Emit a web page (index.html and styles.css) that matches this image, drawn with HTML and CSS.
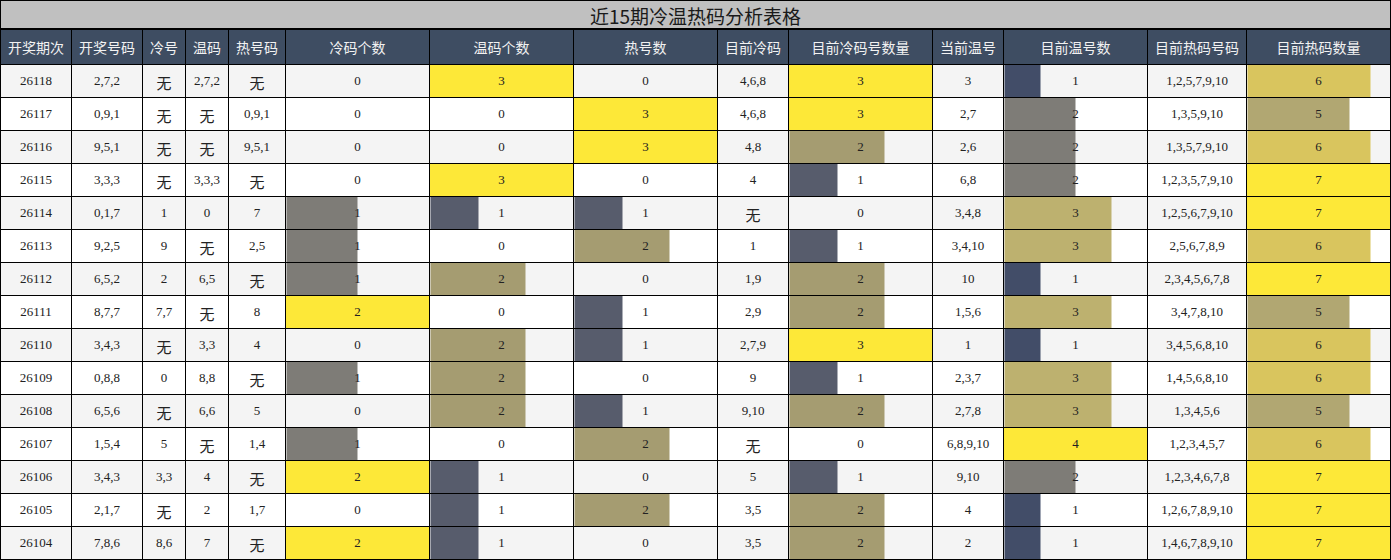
FILE: index.html
```html
<!DOCTYPE html>
<html lang="zh">
<head>
<meta charset="utf-8">
<title>近15期冷温热码分析表格</title>
<link rel="stylesheet" href="styles.css">
</head>
<body>
<div class="title">近15期冷温热码分析表格</div>
<table class="grid">
<colgroup>
<col class="w71"><col class="w71"><col class="w43"><col class="w43"><col class="w57">
<col class="w144"><col class="w144"><col class="w144"><col class="w71"><col class="w144">
<col class="w71"><col class="w144"><col class="w99"><col class="w145">
</colgroup>
<thead>
<tr><th>开奖期次</th><th>开奖号码</th><th>冷号</th><th>温码</th><th>热号码</th><th>冷码个数</th><th>温码个数</th><th>热号数</th><th>目前冷码</th><th>目前冷码号数量</th><th>当前温号</th><th>目前温号数</th><th>目前热码号码</th><th>目前热码数量</th></tr>
</thead>
<tbody>
<tr><td>26118</td><td>2,7,2</td><td class="wu">无</td><td>2,7,2</td><td class="wu">无</td><td>0</td><td class="full">3</td><td>0</td><td>4,6,8</td><td class="full">3</td><td>3</td><td class="q14">1</td><td>1,2,5,7,9,10</td><td class="q67">6</td></tr>
<tr><td>26117</td><td>0,9,1</td><td class="wu">无</td><td class="wu">无</td><td>0,9,1</td><td>0</td><td>0</td><td class="full">3</td><td>4,6,8</td><td class="full">3</td><td>2,7</td><td class="q12">2</td><td>1,3,5,9,10</td><td class="q57">5</td></tr>
<tr><td>26116</td><td>9,5,1</td><td class="wu">无</td><td class="wu">无</td><td>9,5,1</td><td>0</td><td>0</td><td class="full">3</td><td>4,8</td><td class="q23">2</td><td>2,6</td><td class="q12">2</td><td>1,3,5,7,9,10</td><td class="q67">6</td></tr>
<tr><td>26115</td><td>3,3,3</td><td class="wu">无</td><td>3,3,3</td><td class="wu">无</td><td>0</td><td class="full">3</td><td>0</td><td>4</td><td class="q13">1</td><td>6,8</td><td class="q12">2</td><td>1,2,3,5,7,9,10</td><td class="full">7</td></tr>
<tr><td>26114</td><td>0,1,7</td><td>1</td><td>0</td><td>7</td><td class="q12">1</td><td class="q13">1</td><td class="q13">1</td><td class="wu">无</td><td>0</td><td>3,4,8</td><td class="q34">3</td><td>1,2,5,6,7,9,10</td><td class="full">7</td></tr>
<tr><td>26113</td><td>9,2,5</td><td>9</td><td class="wu">无</td><td>2,5</td><td class="q12">1</td><td>0</td><td class="q23">2</td><td>1</td><td class="q13">1</td><td>3,4,10</td><td class="q34">3</td><td>2,5,6,7,8,9</td><td class="q67">6</td></tr>
<tr><td>26112</td><td>6,5,2</td><td>2</td><td>6,5</td><td class="wu">无</td><td class="q12">1</td><td class="q23">2</td><td>0</td><td>1,9</td><td class="q23">2</td><td>10</td><td class="q14">1</td><td>2,3,4,5,6,7,8</td><td class="full">7</td></tr>
<tr><td>26111</td><td>8,7,7</td><td>7,7</td><td class="wu">无</td><td>8</td><td class="full">2</td><td>0</td><td class="q13">1</td><td>2,9</td><td class="q23">2</td><td>1,5,6</td><td class="q34">3</td><td>3,4,7,8,10</td><td class="q57">5</td></tr>
<tr><td>26110</td><td>3,4,3</td><td class="wu">无</td><td>3,3</td><td>4</td><td>0</td><td class="q23">2</td><td class="q13">1</td><td>2,7,9</td><td class="full">3</td><td>1</td><td class="q14">1</td><td>3,4,5,6,8,10</td><td class="q67">6</td></tr>
<tr><td>26109</td><td>0,8,8</td><td>0</td><td>8,8</td><td class="wu">无</td><td class="q12">1</td><td class="q23">2</td><td>0</td><td>9</td><td class="q13">1</td><td>2,3,7</td><td class="q34">3</td><td>1,4,5,6,8,10</td><td class="q67">6</td></tr>
<tr><td>26108</td><td>6,5,6</td><td class="wu">无</td><td>6,6</td><td>5</td><td>0</td><td class="q23">2</td><td class="q13">1</td><td>9,10</td><td class="q23">2</td><td>2,7,8</td><td class="q34">3</td><td>1,3,4,5,6</td><td class="q57">5</td></tr>
<tr><td>26107</td><td>1,5,4</td><td>5</td><td class="wu">无</td><td>1,4</td><td class="q12">1</td><td>0</td><td class="q23">2</td><td class="wu">无</td><td>0</td><td>6,8,9,10</td><td class="full">4</td><td>1,2,3,4,5,7</td><td class="q67">6</td></tr>
<tr><td>26106</td><td>3,4,3</td><td>3,3</td><td>4</td><td class="wu">无</td><td class="full">2</td><td class="q13">1</td><td>0</td><td>5</td><td class="q13">1</td><td>9,10</td><td class="q12">2</td><td>1,2,3,4,6,7,8</td><td class="full">7</td></tr>
<tr><td>26105</td><td>2,1,7</td><td class="wu">无</td><td>2</td><td>1,7</td><td>0</td><td class="q13">1</td><td class="q23">2</td><td>3,5</td><td class="q23">2</td><td>4</td><td class="q14">1</td><td>1,2,6,7,8,9,10</td><td class="full">7</td></tr>
<tr><td>26104</td><td>7,8,6</td><td>8,6</td><td>7</td><td class="wu">无</td><td class="full">2</td><td class="q13">1</td><td>0</td><td>3,5</td><td class="q23">2</td><td>2</td><td class="q14">1</td><td>1,4,6,7,8,9,10</td><td class="full">7</td></tr>
</tbody>
</table>
</body>
</html>
```

FILE: styles.css
```css
html, body {
  margin: 0;
  padding: 0;
  background: #ffffff;
}

.title {
  box-sizing: border-box;
  width: 1391px;
  height: 29px;
  border: 1px solid #000;
  background: #c0c0c0;
  color: #1a1a1a;
  font-family: "Noto Sans CJK SC", "Noto Sans", sans-serif;
  font-size: 19px;
  line-height: 29px;
  text-align: center;
}

.grid {
  width: 1391px;
  table-layout: fixed;
  border-collapse: collapse;
  border: 1px solid #000;
}

.w43 { width: 43px; }
.w57 { width: 57px; }
.w71 { width: 71px; }
.w99 { width: 99px; }
.w144 { width: 144px; }
.w145 { width: 144px; }

.grid th,
.grid td {
  border: 1px solid #000;
  padding: 0;
  text-align: center;
  white-space: nowrap;
  overflow: hidden;
}

.grid th {
  height: 34px;
  background: #3e4d62;
  color: #f2f2f2;
  font-family: "Noto Sans CJK SC", "Noto Sans", sans-serif;
  font-size: 14px;
  font-weight: normal;
}

.grid td {
  height: 32px;
  color: #222;
  font-family: "Liberation Serif", "Noto Sans CJK SC", serif;
  font-size: 13px;
}

.grid td.wu {
  font-family: "Noto Sans CJK SC", sans-serif;
  font-size: 15px;
  padding-top: 3px;
  height: 29px;
}

.grid tbody tr:nth-child(odd) { background: #f4f4f4; }
.grid tbody tr:nth-child(even) { background: #ffffff; }

.grid td.full { background: #fde838; }
.grid td.q14 { background: linear-gradient(90deg, #424d68 25%, transparent 25%); }
.grid td.q13 { background: linear-gradient(90deg, #575c6c 33.3%, transparent 33.3%); }
.grid td.q12 { background: linear-gradient(90deg, #7e7c77 50%, transparent 50%); }
.grid td.q23 { background: linear-gradient(90deg, #a59c71 66.7%, transparent 66.7%); }
.grid td.q57 { background: linear-gradient(90deg, #b1a772 71.4%, transparent 71.4%); }
.grid td.q34 { background: linear-gradient(90deg, #bdb16f 75%, transparent 75%); }
.grid td.q67 { background: linear-gradient(90deg, #d9c55e 85.7%, transparent 85.7%); }
```
